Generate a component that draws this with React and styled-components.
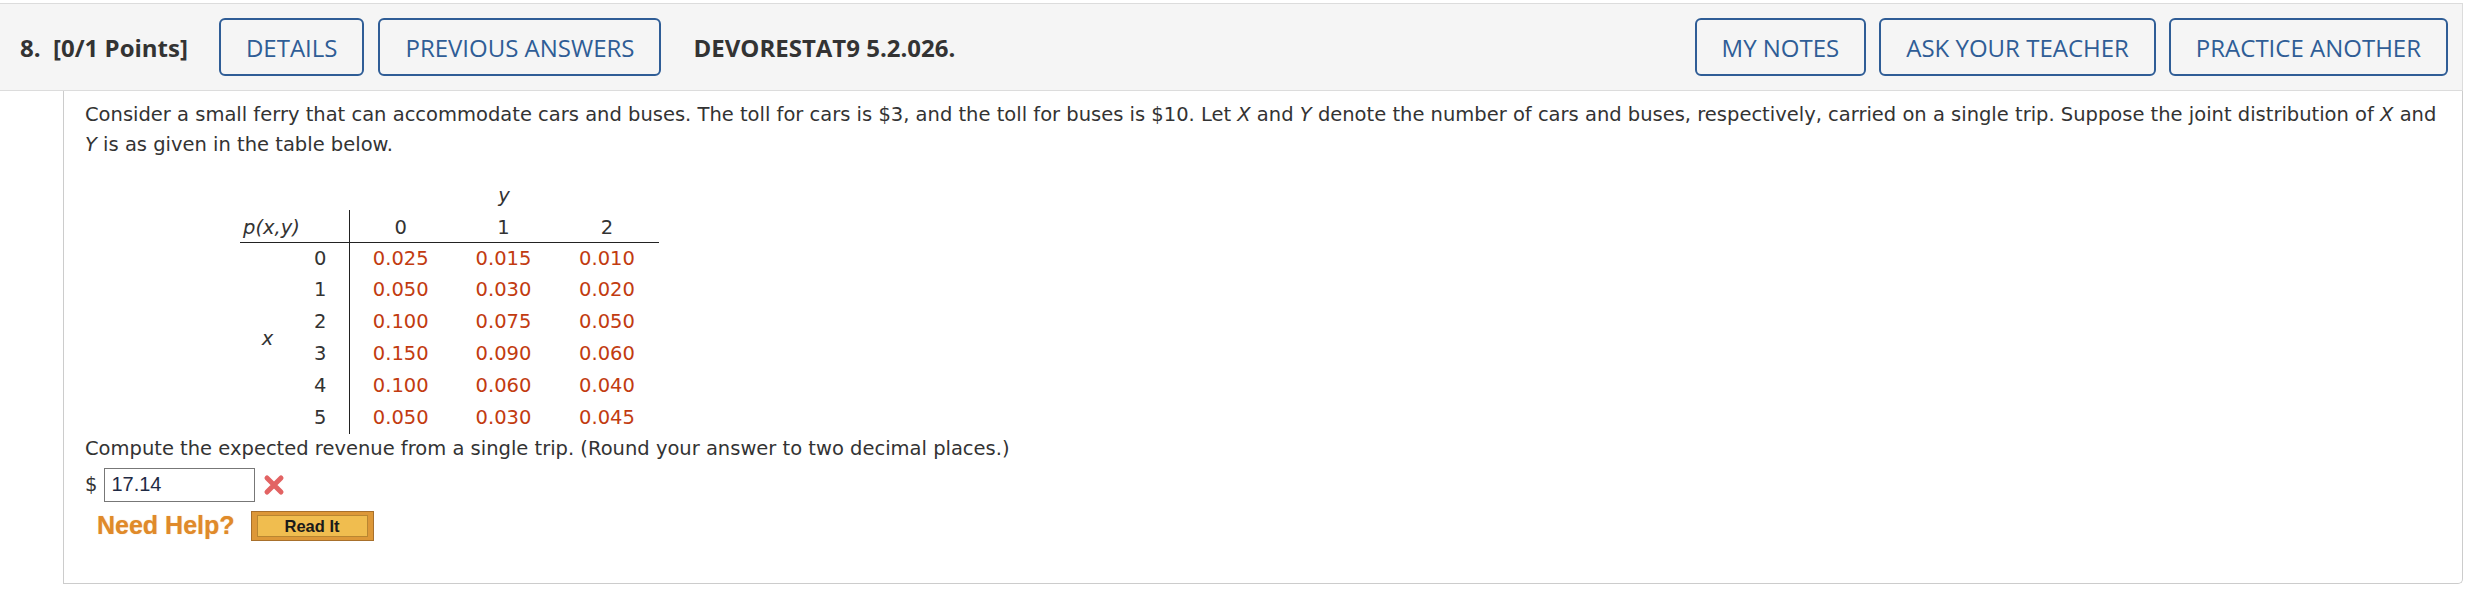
import { createGlobalStyle, styled } from 'styled-components';

const GlobalStyle = createGlobalStyle`
    body {
        margin: 0;
        background: #fff;
    }
`;

const Page = styled.div`
    width: 2463px;
    padding-top: 3px;
`;

const Header = styled.header`
    box-sizing: border-box;
    height: 88px;
    display: flex;
    align-items: center;
    padding: 0 14px 0 20px;
    background: #f5f5f5;
    border: 1px solid #dcdcdc;
    border-left: none;
    font-family: 'Open Sans', 'Liberation Sans', sans-serif;
    font-size: 24px;
    color: #333;
`;

const Title = styled.span`
    font-weight: 700;
    white-space: pre;
    margin-right: 31px;
`;

const Code = styled.span`
    font-weight: 700;
    margin-left: 32px;
`;

const Spacer = styled.div`
    flex: 1;
`;

const OutlineButton = styled.button`
    box-sizing: border-box;
    height: 58px;
    padding: 0 25px;
    margin-left: ${(p) => p.$gap || 0}px;
    background: transparent;
    border: 2px solid #2f5d96;
    border-radius: 6px;
    font-family: inherit;
    font-size: 24px;
    color: #2f5d96;
`;

const Panel = styled.section`
    box-sizing: border-box;
    height: 493px;
    margin-left: 63px;
    padding: 9px 22px 0 21px;
    border: 1px solid #cccccc;
    border-top: none;
    border-bottom-right-radius: 5px;
    font-family: Verdana, 'DejaVu Sans', sans-serif;
    font-size: 19.5px;
    line-height: 29.5px;
    color: #333;
`;

const Prompt = styled.p`
    margin: 0;
`;

const DistTable = styled.table`
    border-collapse: collapse;
    margin: 22px 0 0 155px;
    line-height: 1;
`;

const Cell = styled.td`
    padding: 0;
    height: 32px;
    width: ${(p) => p.$w || 103}px;
    text-align: ${(p) => p.$align || 'center'};
    color: ${(p) => (p.$value ? '#c23b10' : '#333')};
    border-left: ${(p) => (p.$rule ? '1px solid #222' : 'none')};
    padding-right: ${(p) => p.$pr || 0}px;
    padding-left: ${(p) => p.$pl || 0}px;
    font-style: ${(p) => (p.$italic ? 'italic' : 'normal')};
    box-sizing: border-box;
`;

const HeadRow = styled.tr`
    border-bottom: 1px solid #222;
    & td {
        padding-top: 3px;
    }
`;

const AxisRow = styled.tr`
    & td {
        height: 29px;
    }
`;

const AnswerRow = styled.div`
    display: flex;
    align-items: center;
    margin-top: 4px;
`;

const AnswerInput = styled.input`
    box-sizing: border-box;
    width: 151px;
    height: 34px;
    margin-left: 7px;
    padding: 0 6px;
    border: 1px solid #777;
    font-family: 'Liberation Sans', Arial, sans-serif;
    font-size: 20px;
    color: #1f2a44;
`;

const HelpRow = styled.div`
    display: flex;
    align-items: center;
    gap: 16px;
    margin: 9px 0 0 12px;
`;

const NeedHelp = styled.span`
    font-family: 'Liberation Sans', Arial, sans-serif;
    font-weight: 700;
    font-size: 25px;
    color: #e08a2a;
    text-shadow: 0 0 1px rgba(224, 138, 42, 0.6);
`;

const ReadIt = styled.button`
    box-sizing: border-box;
    width: 123px;
    height: 30px;
    padding: 3px 5px;
    background: #dd9838;
    border: 1px solid #a8702c;
    & span {
        display: block;
        height: 100%;
        box-sizing: border-box;
        background: #f0bd4f;
        border: 1px solid #b98631;
        font-family: 'Liberation Sans', Arial, sans-serif;
        font-weight: 700;
        font-size: 16.5px;
        line-height: 20px;
        color: #1a1a1a;
    }
`;

const rows = [
    ['0.025', '0.015', '0.010'],
    ['0.050', '0.030', '0.020'],
    ['0.100', '0.075', '0.050'],
    ['0.150', '0.090', '0.060'],
    ['0.100', '0.060', '0.040'],
    ['0.050', '0.030', '0.045'],
];

function WrongMark() {
    return (
        <svg width="22" height="22" viewBox="0 0 22 22" style={{ marginLeft: 8 }}>
            <path d="M4 4 L18 18 M18 4 L4 18" stroke="#e26363" strokeWidth="5" strokeLinecap="round" />
        </svg>
    );
}

function App() {
    return (
        <Page>
            <GlobalStyle />
            <Header>
                <Title>8.  [0/1 Points]</Title>
                <OutlineButton>DETAILS</OutlineButton>
                <OutlineButton $gap={14}>PREVIOUS ANSWERS</OutlineButton>
                <Code>DEVORESTAT9 5.2.026.</Code>
                <Spacer />
                <OutlineButton>MY NOTES</OutlineButton>
                <OutlineButton $gap={13}>ASK YOUR TEACHER</OutlineButton>
                <OutlineButton $gap={13}>PRACTICE ANOTHER</OutlineButton>
            </Header>
            <Panel>
                <Prompt>
                    Consider a small ferry that can accommodate cars and buses. The toll for cars is $3, and the toll for
                    buses is $10. Let <i>X</i> and <i>Y</i> denote the number of cars and buses, respectively, carried on a
                    single trip. Suppose the joint distribution of <i>X</i> and <i>Y</i> is as given in the table below.
                </Prompt>
                <DistTable>
                    <tbody>
                        <AxisRow>
                            <Cell $w={55} />
                            <Cell $w={54} />
                            <Cell colSpan={3} $italic>y</Cell>
                        </AxisRow>
                        <HeadRow>
                            <Cell colSpan={2} $align="left" $pl={3} $italic>p(x,y)</Cell>
                            <Cell $rule>0</Cell>
                            <Cell>1</Cell>
                            <Cell $w={104}>2</Cell>
                        </HeadRow>
                        {rows.map((r, i) => (
                            <tr key={i}>
                                {i === 0 && (
                                    <Cell rowSpan={6} $w={55} $italic>x</Cell>
                                )}
                                <Cell $w={54} $align="right" $pr={22}>{i}</Cell>
                                <Cell $rule $value>{r[0]}</Cell>
                                <Cell $value>{r[1]}</Cell>
                                <Cell $w={104} $value>{r[2]}</Cell>
                            </tr>
                        ))}
                    </tbody>
                </DistTable>
                <Prompt>Compute the expected revenue from a single trip. (Round your answer to two decimal places.)</Prompt>
                <AnswerRow>
                    $<AnswerInput defaultValue="17.14" readOnly />
                    <WrongMark />
                </AnswerRow>
                <HelpRow>
                    <NeedHelp>Need Help?</NeedHelp>
                    <ReadIt><span>Read It</span></ReadIt>
                </HelpRow>
            </Panel>
        </Page>
    );
}

export default App;
